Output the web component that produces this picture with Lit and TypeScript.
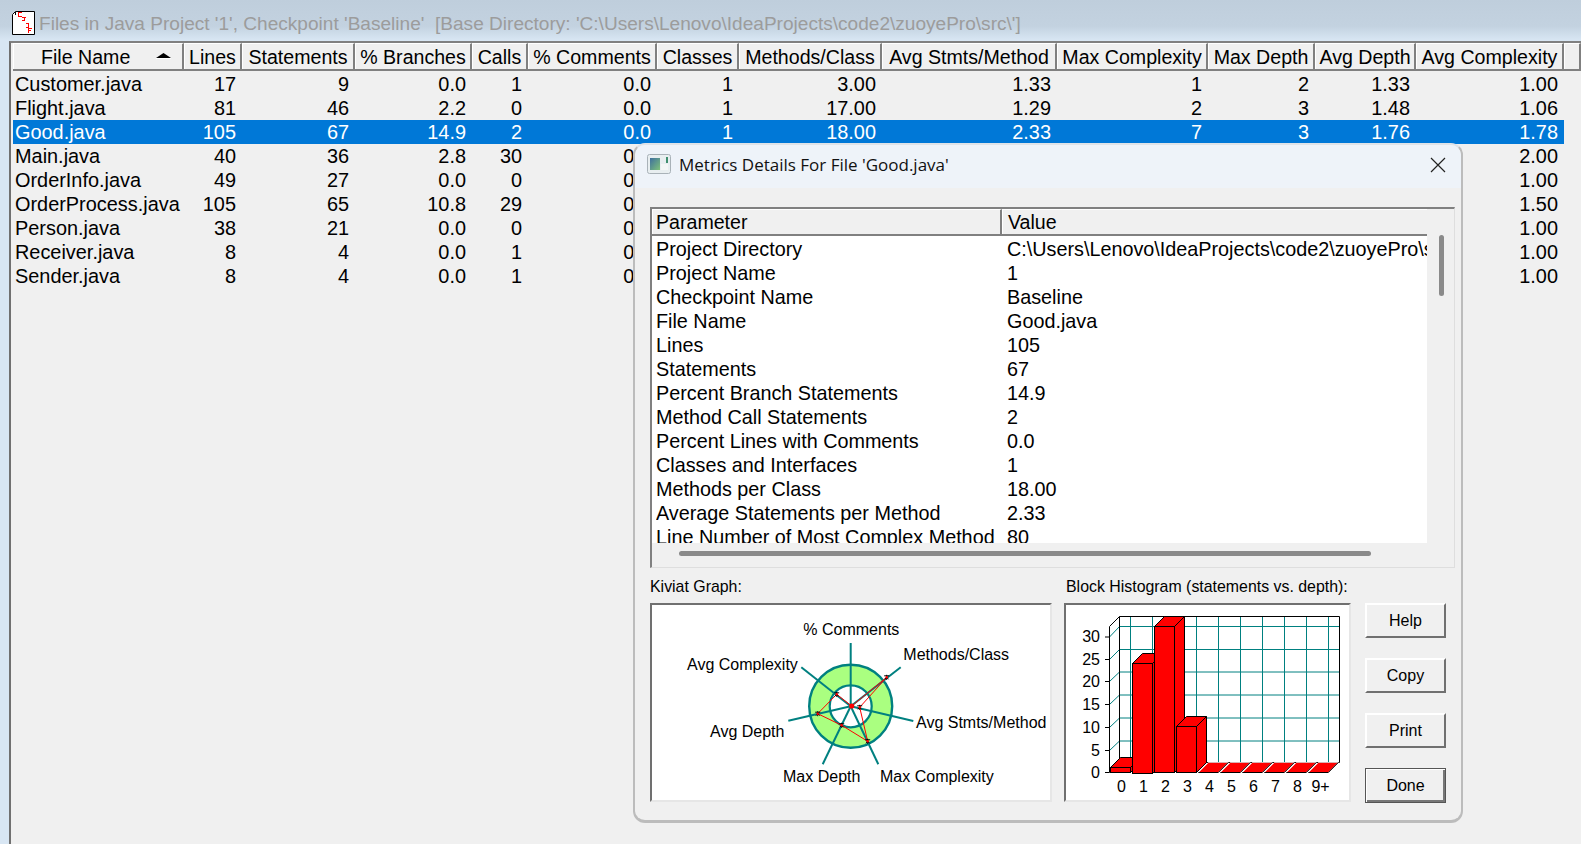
import { LitElement, html, css, svg } from "lit";
import { customElement } from "lit/decorators.js";

const COLS = ["File Name","Lines","Statements","% Branches","Calls","% Comments","Classes","Methods/Class","Avg Stmts/Method","Max Complexity","Max Depth","Avg Depth","Avg Complexity"];
const ROWS: string[][] = [
  ["Customer.java","17","9","0.0","1","0.0","1","3.00","1.33","1","2","1.33","1.00"],
  ["Flight.java","81","46","2.2","0","0.0","1","17.00","1.29","2","3","1.48","1.06"],
  ["Good.java","105","67","14.9","2","0.0","1","18.00","2.33","7","3","1.76","1.78"],
  ["Main.java","40","36","2.8","30","0.0","","","","","","","2.00"],
  ["OrderInfo.java","49","27","0.0","0","0.0","","","","","","","1.00"],
  ["OrderProcess.java","105","65","10.8","29","0.0","","","","","","","1.50"],
  ["Person.java","38","21","0.0","0","0.0","","","","","","","1.00"],
  ["Receiver.java","8","4","0.0","1","0.0","","","","","","","1.00"],
  ["Sender.java","8","4","0.0","1","0.0","","","","","","","1.00"],
];
const DETAILS: [string,string][] = [
  ["Project Directory","C:\\Users\\Lenovo\\IdeaProjects\\code2\\zuoyePro\\src\\"],
  ["Project Name","1"],
  ["Checkpoint Name","Baseline"],
  ["File Name","Good.java"],
  ["Lines","105"],
  ["Statements","67"],
  ["Percent Branch Statements","14.9"],
  ["Method Call Statements","2"],
  ["Percent Lines with Comments","0.0"],
  ["Classes and Interfaces","1"],
  ["Methods per Class","18.00"],
  ["Average Statements per Method","2.33"],
  ["Line Number of Most Complex Method","80"],
];

const CX = 850.7, CY = 706.3;
const SPOKES: [number,number][] = [[850.7,643],[900.7,667.3],[913.3,721],[878.3,764.3],[822.7,764.3],[788.3,720.7],[801.3,667.3]];
const POINTS: [number,number][] = [[851.7,706],[886.7,677.3],[859.7,707.3],[867.7,741.3],[841.7,725.3],[817.7,713.7],[836.7,694.3]];
const KLABELS: [string,number,number][] = [
  ["% Comments",803.3,635],["Methods/Class",903.3,660],["Avg Complexity",687,670],
  ["Avg Stmts/Method",916,727.7],["Avg Depth",710,737],["Max Depth",783,782],["Max Complexity",880,782],
];

function kiviat() {
  const pts = POINTS.map(p => p.join(",")).join(" ");
  return html`<svg class="chart" viewBox="652 605 398 195">
    <circle cx=${CX} cy=${CY} r="41.5" fill="#aaff80" stroke="#008080" stroke-width="2.4"></circle>
    <circle cx=${CX} cy=${CY} r="21" fill="#fff" stroke="#008080" stroke-width="2.2"></circle>
    ${SPOKES.map(s => svg`<line x1=${CX} y1=${CY} x2=${s[0]} y2=${s[1]} stroke="#008080" stroke-width="2"></line>`)}
    <polygon points=${pts} fill="none" stroke="#ff0000" stroke-width="1"></polygon>
    ${POINTS.slice(1).map(p => svg`
      <path d="M${p[0]-2.5} ${p[1]-1.5}h5M${p[0]} ${p[1]-2.5}v5M${p[0]-1.8} ${p[1]+2}l1.8 -2l1.8 2" fill="none" stroke="#000" stroke-width="1"></path>
      <circle cx=${p[0]} cy=${p[1]} r="1.2" fill="#ff0000"></circle>`)}
    <circle cx=${POINTS[0][0]} cy=${POINTS[0][1]} r="2.6" fill="#ff0000"></circle>
    ${KLABELS.map(l => svg`<text class="lab" x=${l[1]} y=${l[2]}>${l[0]}</text>`)}
  </svg>`;
}

function bar(x: number, top: number, bottom: number) {
  const w = 20, d = 10;
  return svg`
    <path d="M${x+w} ${top}l${d} ${-d}V${bottom-d}l${-d} ${d}z" fill="#ff0000" stroke="#000"></path>
    <path d="M${x} ${top}l${d} ${-d}h${w}l${-d} ${d}z" fill="#ff0000" stroke="#000"></path>
    <rect x=${x} y=${top} width=${w} height=${bottom-top} fill="#ff0000" stroke="#000"></rect>`;
}

function histogram() {
  const bx0 = 1119.5, bx1 = 1339.5, by0 = 616.5, by1 = 762.5;
  const fx = 1109.5, fy0 = 626.5, fy1 = 772.5;
  const vs = Array.from({ length: 10 }, (_, i) => 1130.5 + 22 * i);
  const hs = [626.5, 649.5, 672, 695, 718, 741];
  const ticks = [772.5, 750.5, 727.5, 704.5, 681.5, 659.5, 637];
  const ylab = ["0","5","10","15","20","25","30"];
  const xlab = ["0","1","2","3","4","5","6","7","8","9+"];
  return html`<svg class="chart" viewBox="1066 605 283 195">
    ${vs.map(x => svg`<line x1=${x} y1=${by0} x2=${x} y2=${by1} stroke="#008080"></line>`)}
    ${hs.map(y => svg`<line x1=${bx0} y1=${y} x2=${bx1} y2=${y} stroke="#008080"></line>`)}
    ${ticks.slice(1).map((y, i) => svg`<line x1=${fx} y1=${y} x2=${bx0} y2=${hs[5-i]} stroke="#008080"></line>`)}
    <path d="M${bx1} ${by1}V${by0}H${bx0}V${by1}M${bx0} ${by0}L${fx} ${fy0}V${fy1}" fill="none" stroke="#000"></path>
    ${ticks.map(y => svg`<line x1="1105" y1=${y} x2=${fx} y2=${y} stroke="#000"></line>`)}
    ${ylab.map((t, i) => svg`<text class="lab end" x="1100" y=${ticks[i] + 5}>${t}</text>`)}
    ${xlab.map((t, i) => svg`<text class="lab mid" x=${1121.5 + 22 * i + (i === 9 ? 1 : 0)} y="792">${t}</text>`)}
    <path d="M1119.5 762.5H1339.5" stroke="#000"></path>
    ${[4,5,6,7,8,9].map(i => {
      const x = 1110.3 + 22 * i;
      return svg`<path d="M${x} ${fy1}l10 -10h20l-10 10z" fill="#ff0000" stroke="#fff" stroke-width=".7"></path>
                 <path d="M${x} ${fy1}h20l10 -10" fill="none" stroke="#000"></path>`;
    })}
    ${bar(1110.5, 767.5, 772.5)}
    ${bar(1132.5, 663.5, 773.5)}
    ${bar(1154.5, 626.5, 772.5)}
    ${bar(1176.5, 726.5, 772.5)}
  </svg>`;
}

@customElement("app-root")
export class AppRoot extends LitElement {
  static styles = css`
    :host {
      display: flex; flex-direction: column; position: relative; width: 1581px; height: 844px; overflow: hidden;
      background: linear-gradient(#bfcedc 0, #c3d2e0 26px, #d8e6f3 40px, #d8e6f3 100%);
      font-family: "Liberation Sans", Arial, sans-serif; color: #000; font-size: 19.6px;
    }
    .title { height: 41px; flex: none; display: flex; align-items: center; padding: 7px 0 0 12px; box-sizing: border-box; gap: 4px; }
    .title svg { display: block; flex: none; margin-top: -2px; }
    .title span { color: #9c9c9c; white-space: pre; line-height: 24px; font-size: 19.07px; }
    .main { flex: 1; margin-left: 9px; background: #f0f0f0; border-left: 2px solid #707070; border-top: 2px solid #808080; display: flex; flex-direction: column; min-height: 0; padding-left: 2px; }
    .head, .row { display: grid; grid-template-columns: 171px 58px 113px 117px 56px 129px 82px 143px 175px 151px 107px 101px 148px 1fr; }
    .head { height: 26px; margin-top: 0; border-bottom: 2px solid #808080; box-sizing: content-box; margin-bottom: 1px; }
    .hc { border-top: 1px solid #fff; border-left: 1px solid #fff; border-right: 2px solid #808080; box-sizing: border-box; height: 26px; display: flex; align-items: center; justify-content: center; line-height: 24px; white-space: nowrap; overflow: hidden; }
    .hc.first { justify-content: flex-start; padding-left: 27px; position: relative; }
    .sort { position: absolute; right: 11px; top: 9px; }
    .row { height: 24px; line-height: 24px; font-size: 19.9px; }
    .row.sel { background: #0078d7; color: #fff; margin-right: 17px; }
    .c { text-align: right; padding-right: 6px; white-space: nowrap; }
    .c.first { text-align: left; padding: 0 0 0 2px; }

    .dlg { position: absolute; left: 633px; top: 143px; width: 830px; height: 680px; box-sizing: border-box; background: #f0f0f0; border: 2px solid #bcbcbc; border-top-color: #dfe3e8; border-bottom-width: 3px; border-radius: 12px; display: flex; flex-direction: column; overflow: hidden; }
    .dlgbar { flex: none; height: 43px; box-sizing: border-box; padding: 0 0 5px 12px; background: #eef3f9; display: flex; align-items: center; gap: 8px; font-family: "Open Sans", "Noto Sans", sans-serif; font-size: 17px; color: #111; position: relative; }
    .dlgbar svg.ic { flex: none; }
    .close { position: absolute; right: 15px; top: 12px; }
    .dbody { flex: 1; padding: 19px 6px 0 15px; display: flex; flex-direction: column; min-height: 0; }
    .list { position: relative; height: 361px; box-sizing: border-box; border-left: 2px solid #808080; border-top: 2px solid #808080; border-right: 1px solid #dedede; border-bottom: 1px solid #dedede; width: 805px; }
    .lhead { display: grid; grid-template-columns: 350px 425px; height: 25px; border-bottom: 2px solid #808080; box-sizing: content-box; width: 775px; }
    .lh { box-sizing: border-box; height: 25px; line-height: 24px; padding-left: 3px; border-top: 1px solid #fff; border-left: 1px solid #fff; }
    .lh.a { border-right: 2px solid #808080; }
    .lh.b { padding-left: 5px; }
    .lbody { background: #fff; width: 775px; height: 307px; overflow: hidden; padding-top: 1px; box-sizing: border-box; }
    .lrow { display: grid; grid-template-columns: 351px 1fr; height: 24px; line-height: 24px; padding-left: 4px; white-space: nowrap; font-size: 19.8px; }
    .lrow span { overflow: hidden; }
    .vthumb { position: absolute; left: 787px; top: 26px; width: 5px; height: 61px; border-radius: 3px; background: #8a8a8a; }
    .hthumb { position: absolute; left: 27px; top: 342px; width: 692px; height: 5px; border-radius: 3px; background: #8a8a8a; }
    .bottom { display: flex; margin-top: 0; flex: 1; min-height: 0; }
    .col { display: flex; flex-direction: column; }
    .col.k { width: 402px; margin-right: 12px; }
    .col.h { width: 287px; margin-right: 14px; }
    .cap { font-size: 15.9px; height: 35px; line-height: 18px; padding-top: 10px; box-sizing: border-box; white-space: nowrap; }
    .col.h .cap { padding-left: 2px; }
    .box { height: 199px; background: #fff; box-sizing: border-box; border-left: 2px solid #707070; border-top: 2px solid #707070; border-right: 2px solid #e6e6e6; border-bottom: 2px solid #e6e6e6; }
    .chart { display: block; width: 100%; height: 100%; }
    .lab { font: 16px "Liberation Sans", Arial, sans-serif; fill: #000; }
    .end { text-anchor: end; }
    .mid { text-anchor: middle; }
    .btns { display: flex; flex-direction: column; gap: 20px; padding-top: 35px; }
    .btn { width: 81px; height: 35px; box-sizing: border-box; background: #f0f0f0; font: 16px "Liberation Sans", Arial, sans-serif; color: #000; border: 2px solid; border-color: #fff #707070 #707070 #fff; padding: 0; }
    .btn.def { border: 1px solid #555; box-shadow: inset 1px 1px 0 #fff, inset -2px -2px 0 #777; }
  `;

  render() {
    return html`
      <div class="title">
        <svg width="23" height="24" viewBox="0 0 23 24">
          <path d="M3.5 .5H22.5V23.5H.5V3.5z" fill="#fff" stroke="#000"></path>
          <path d="M3 1h1v3H3z" fill="#000"></path>
          <path d="M6 1h4v1H7v3h3v1H6zM10 6h4v1h-1v3h-3v-1h2V7h-2zM14 12h3v5h-3v-1h2v-3h-2zM16 17h4v1h-3v1h2v1h-2v2h-1z" fill="#ff0000"></path>
        </svg>
        <span>Files in Java Project '1', Checkpoint 'Baseline'  [Base Directory: 'C:\\Users\\Lenovo\\IdeaProjects\\code2\\zuoyePro\\src\\']</span>
      </div>
      <div class="main">
        <div class="head">
          ${COLS.map((c, i) => html`<div class="hc ${i === 0 ? "first" : ""}">${c}${i === 0 ? html`<svg class="sort" width="15" height="7" viewBox="0 0 15 7"><path d="M7.5 0L15 5H0z" fill="#000"></path><path d="M0 5h15v1H0z" fill="#fff"></path></svg>` : ""}</div>`)}
          <div class="hc"></div>
        </div>
        ${ROWS.map((r, i) => html`<div class="row ${i === 2 ? "sel" : ""}">
          ${r.map((v, j) => html`<div class="c ${j === 0 ? "first" : ""}">${v}</div>`)}
        </div>`)}
      </div>
      <div class="dlg">
        <div class="dlgbar">
          <svg class="ic" width="24" height="20" viewBox="0 0 24 20">
            <defs><linearGradient id="g" x1="0" y1="0" x2="1" y2="1"><stop offset="0" stop-color="#3e6f9e"></stop><stop offset="1" stop-color="#7fc27a"></stop></linearGradient></defs>
            <rect x=".5" y=".5" width="23" height="19" rx="2" fill="#e8eef0" stroke="#a9b2b8"></rect>
            <rect x="3" y="4" width="10" height="12" fill="url(#g)"></rect>
            <rect x="14" y="10" width="7" height="6" fill="#f4f6f6"></rect>
            <rect x="19" y="3" width="2" height="6" fill="#3f8f6f"></rect>
          </svg>
          <span>Metrics Details For File 'Good.java'</span>
          <svg class="close" width="16" height="16" viewBox="0 0 16 16"><path d="M1 1l14 14M15 1L1 15" stroke="#222" stroke-width="1.2" fill="none"></path></svg>
        </div>
        <div class="dbody">
          <div class="list">
            <div class="lhead"><div class="lh a">Parameter</div><div class="lh b">Value</div></div>
            <div class="lbody">
              ${DETAILS.map(d => html`<div class="lrow"><span>${d[0]}</span><span>${d[1]}</span></div>`)}
            </div>
            <div class="vthumb"></div>
            <div class="hthumb"></div>
          </div>
          <div class="bottom">
            <div class="col k"><div class="cap">Kiviat Graph:</div><div class="box">${kiviat()}</div></div>
            <div class="col h"><div class="cap">Block Histogram (statements vs. depth):</div><div class="box">${histogram()}</div></div>
            <div class="btns">
              <button class="btn">Help</button>
              <button class="btn">Copy</button>
              <button class="btn">Print</button>
              <button class="btn def">Done</button>
            </div>
          </div>
        </div>
      </div>
    `;
  }
}
